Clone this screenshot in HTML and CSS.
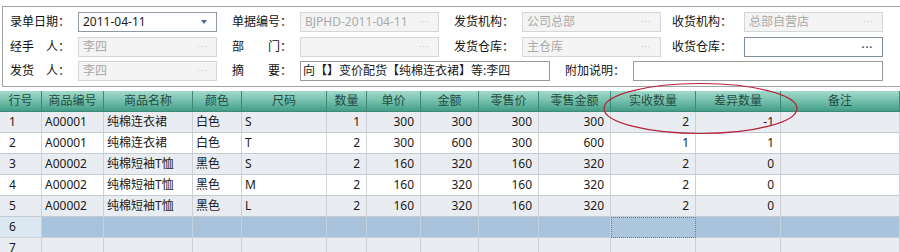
FILE: index.html
```html
<!DOCTYPE html>
<html>
<head>
<meta charset="utf-8">
<link rel="stylesheet" href="styles.css">
</head>
<body>
<div class="page">
  <div class="panel">
    <div class="row r1">
      <span class="lbl">录单日期：</span>
      <div class="inp active"><span class="val">2011-04-11</span><span class="caret"></span></div>
      <span class="sp"></span>
      <span class="lbl">单据编号：</span>
      <div class="inp dis"><span class="val">BJPHD-2011-04-11</span><span class="dots">···</span></div>
      <span class="sp"></span>
      <span class="lbl">发货机构：</span>
      <div class="inp dis"><span class="val">公司总部</span><span class="dots">···</span></div>
      <span class="sp sp4"></span>
      <span class="lbl lbl4">收货机构：</span>
      <div class="inp dis"><span class="val">总部自营店</span><span class="dots">···</span></div>
    </div>
    <div class="row r2">
      <span class="lbl">经手　人：</span>
      <div class="inp dis"><span class="val">李四</span><span class="dots">···</span></div>
      <span class="sp"></span>
      <span class="lbl">部　　门：</span>
      <div class="inp dis"><span class="val"></span><span class="dots">···</span></div>
      <span class="sp"></span>
      <span class="lbl">发货仓库：</span>
      <div class="inp dis"><span class="val">主仓库</span><span class="dots">···</span></div>
      <span class="sp sp4"></span>
      <span class="lbl lbl4">收货仓库：</span>
      <div class="inp edit"><span class="val"></span><span class="dots dark">···</span></div>
    </div>
    <div class="row r3">
      <span class="lbl">发货　人：</span>
      <div class="inp dis"><span class="val">李四</span><span class="dots">···</span></div>
      <span class="sp"></span>
      <span class="lbl">摘　　要：</span>
      <div class="inp wide plain"><span class="val">向【】变价配货【纯棉连衣裙】等:李四</span></div>
      <span class="sp"></span>
      <span class="lbl">附加说明：</span>
      <div class="inp wide plain"><span class="val"></span></div>
    </div>
  </div>

  <div class="grid">
    <div class="tr th">
      <div>行号</div><div>商品编号</div><div>商品名称</div><div>颜色</div><div>尺码</div><div>数量</div><div>单价</div><div>金额</div><div>零售价</div><div>零售金额</div><div>实收数量</div><div>差异数量</div><div>备注</div>
    </div>
    <div class="tr odd">
      <div class="no">1</div><div>A00001</div><div>纯棉连衣裙</div><div>白色</div><div>S</div><div class="n">1</div><div class="n">300</div><div class="n">300</div><div class="n">300</div><div class="n">300</div><div class="n">2</div><div class="n">-1</div><div></div>
    </div>
    <div class="tr">
      <div class="no">2</div><div>A00001</div><div>纯棉连衣裙</div><div>白色</div><div>T</div><div class="n">2</div><div class="n">300</div><div class="n">600</div><div class="n">300</div><div class="n">600</div><div class="n">1</div><div class="n">1</div><div></div>
    </div>
    <div class="tr odd">
      <div class="no">3</div><div>A00002</div><div>纯棉短袖T恤</div><div>黑色</div><div>S</div><div class="n">2</div><div class="n">160</div><div class="n">320</div><div class="n">160</div><div class="n">320</div><div class="n">2</div><div class="n">0</div><div></div>
    </div>
    <div class="tr">
      <div class="no">4</div><div>A00002</div><div>纯棉短袖T恤</div><div>黑色</div><div>M</div><div class="n">2</div><div class="n">160</div><div class="n">320</div><div class="n">160</div><div class="n">320</div><div class="n">2</div><div class="n">0</div><div></div>
    </div>
    <div class="tr odd">
      <div class="no">5</div><div>A00002</div><div>纯棉短袖T恤</div><div>黑色</div><div>L</div><div class="n">2</div><div class="n">160</div><div class="n">320</div><div class="n">160</div><div class="n">320</div><div class="n">2</div><div class="n">0</div><div></div>
    </div>
    <div class="tr sel">
      <div class="no">6</div><div></div><div></div><div></div><div></div><div></div><div></div><div></div><div></div><div></div><div class="focus"></div><div></div><div></div>
    </div>
    <div class="tr odd">
      <div class="no">7</div><div></div><div></div><div></div><div></div><div></div><div></div><div></div><div></div><div></div><div></div><div></div><div></div>
    </div>
  </div>

  <svg class="mark" width="900" height="252" viewBox="0 0 900 252">
    <ellipse cx="700.5" cy="108.5" rx="96.5" ry="25" fill="none" stroke="#b81f38" stroke-width="1.2"/>
  </svg>
</div>
</body>
</html>
```

FILE: styles.css
```css
html, body {
  margin: 0;
  padding: 0;
  background: #ffffff;
}
body {
  font-family: "Noto Sans", "Noto Sans CJK SC", sans-serif;
  font-size: 12px;
  color: #1a1a1a;
  width: 900px;
  height: 252px;
  overflow: hidden;
}
.page {
  position: relative;
  width: 900px;
  height: 252px;
  overflow: hidden;
}
.panel {
  margin: 6px 0 0 2px;
  width: 930px;
  border: 1px solid #a3a3a3;
  padding: 5px 0 5px 7px;
  box-sizing: border-box;
}
.row {
  display: flex;
  align-items: center;
  height: 20px;
}
.r1 { margin-bottom: 5px; }
.r2 { margin-bottom: 4px; }
.lbl {
  width: 68px;
  flex: none;
  white-space: nowrap;
  line-height: 20px;
  color: #111;
}
.lbl4 { width: 72px; }
.sp { width: 15px; flex: none; }
.sp4 { width: 11px; }
.inp {
  width: 139px;
  height: 20px;
  flex: none;
  box-sizing: border-box;
  border: 1px solid #d2d2d2;
  background: #ffffff;
  display: flex;
  align-items: center;
  padding: 0 4px 0 4px;
  overflow: hidden;
}
.inp .val {
  flex: 1;
  white-space: nowrap;
  overflow: hidden;
  line-height: 18px;
}
.inp.wide { width: 250px; }
.inp.active { border-color: #8e99a4; }
.inp.edit { border-color: #8090a2; }
.inp.plain { border-color: #9a9a9a; padding-left: 2px; }
.inp.dis {
  background: #f4f4f4;
  border-color: #d6d6d6;
  color: #a9a9a9;
}
.dots {
  flex: none;
  color: #c4c4c4;
  font-family: "DejaVu Sans", sans-serif;
  font-size: 9px;
  letter-spacing: 0.5px;
  margin-right: 5px;
  line-height: 18px;
}
.dots.dark { color: #3c5b8c; font-weight: bold; }
.caret {
  flex: none;
  width: 0;
  height: 0;
  border-left: 3.5px solid transparent;
  border-right: 3.5px solid transparent;
  border-top: 4px solid #4b6a98;
  margin-right: 5px;
}

.grid {
  margin-top: 4px;
}
.tr {
  display: grid;
  grid-template-columns: 42px 62px 89px 49px 85px 40px 54px 58px 60px 72px 85px 85px 1fr;
  height: 21px;
}
.tr > div {
  box-sizing: border-box;
  border-right: 1px solid #cdd1d6;
  border-bottom: 1px solid #c4cad0;
  padding: 0 3px;
  line-height: 20px;
  white-space: nowrap;
  overflow: hidden;
}
.tr > div.n {
  text-align: right;
  padding-right: 6px;
}
.tr > div.no {
  padding-left: 9px;
}
.tr.odd { background: #e9edf1; }
.th {
  background: linear-gradient(#a3dacb 0%, #7cc4b1 40%, #58ad98 75%, #3f9883 100%);
  color: #244b42;
}
.th > div {
  text-align: center;
  border-right: 1px solid #3f8877;
  border-bottom: 1px solid #3f8b7a;
  line-height: 20px;
}
.tr.sel { background: #a8c3db; }
.tr.sel > div.no { background: #dce8f1; }
.tr.sel > div { border-right-color: #c2d2e0; border-bottom-color: #c8d2dc; }
.tr.sel > div.focus {
  border: 1px dotted #5d7fa6;
  background: #acc6dd;
}
.mark {
  position: absolute;
  left: 0;
  top: 0;
  pointer-events: none;
}
```
